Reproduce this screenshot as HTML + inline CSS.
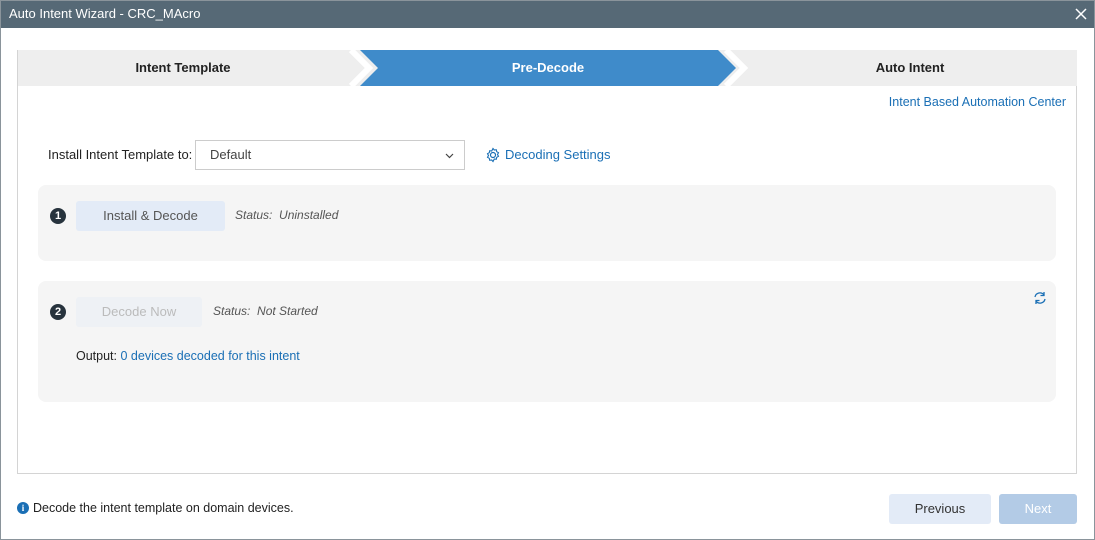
<!DOCTYPE html>
<html><head><style>
*{margin:0;padding:0;box-sizing:border-box}
body{width:1095px;height:540px;position:relative;background:#fff;font-family:"Liberation Sans",sans-serif;font-size:13px;color:#222;overflow:hidden}
.a{position:absolute}
.title{left:0;top:0;width:1095px;height:28px;background:#566976;color:#fff;font-size:13px;line-height:28px;padding-left:9px}
.frame{left:17px;top:50px;width:1060px;height:424px;border:1px solid #d4d4d4}
.lnk{color:#1a6fb5}
.card{background:#f5f5f5;border-radius:8px;left:38px;width:1018px}
.num{width:16px;height:16px;border-radius:50%;background:#27333d;color:#fff;font-size:11px;font-weight:bold;text-align:center;line-height:16px}
.btn{border-radius:3px;text-align:center}
.st{font-style:italic;color:#555;font-size:12px}
</style></head><body>
<div class="a" style="left:0;top:0;width:1095px;height:540px;border:1px solid #8a949b;z-index:5"></div>
<div class="a title">Auto Intent Wizard - CRC_MAcro</div>
<svg class="a" style="left:1075px;top:8px" width="12" height="12"><path d="M1 1L11 11M11 1L1 11" stroke="#fff" stroke-width="1.5"/></svg>
<div class="a frame"></div>
<svg class="a" style="left:18px;top:50px" width="1059" height="36">
<rect x="0" y="0" width="1059" height="36" fill="#eeeeee"/>
<polygon points="342,0 700,0 718,18 700,36 342,36 360,18" fill="#3f8bca"/>
<polyline points="333,0 351,18 333,36" fill="none" stroke="#fff" stroke-width="6"/>
<polyline points="708,0 726,18 708,36" fill="none" stroke="#fff" stroke-width="6"/>
<text x="165" y="22" text-anchor="middle" font-family="Liberation Sans" font-size="13" font-weight="bold" fill="#222">Intent Template</text>
<text x="530" y="22" text-anchor="middle" font-family="Liberation Sans" font-size="13" font-weight="bold" fill="#fff">Pre-Decode</text>
<text x="892" y="22" text-anchor="middle" font-family="Liberation Sans" font-size="13" font-weight="bold" fill="#222">Auto Intent</text>
</svg>
<div class="a lnk" style="right:29px;top:95px;font-size:12.5px">Intent Based Automation Center</div>
<div class="a" style="left:48px;top:147px">Install Intent Template to:</div>
<div class="a" style="left:195px;top:140px;width:270px;height:30px;border:1px solid #ccc;padding:6px 14px;color:#444">Default<svg style="position:absolute;right:10px;top:12px" width="9" height="6"><path d="M1 1L4.5 4.5 8 1" fill="none" stroke="#444" stroke-width="1.2"/></svg></div>
<svg class="a" style="left:485px;top:147px" width="16" height="16" viewBox="0 0 16 16"><circle cx="8" cy="8" r="2.5" fill="none" stroke="#1a6fb5" stroke-width="1.2"/><path d="M8 1.5l1.3 1.5 2-.3.4 2 1.8 1-1 1.8 1 1.8-1.8 1-.4 2-2-.3L8 14.5 6.7 13l-2 .3-.4-2-1.8-1 1-1.8-1-1.8 1.8-1 .4-2 2 .3z" fill="none" stroke="#1a6fb5" stroke-width="1.1"/></svg>
<div class="a lnk" style="left:505px;top:147px">Decoding Settings</div>
<div class="a card" style="top:185px;height:76px"></div>
<div class="a num" style="left:50px;top:208px">1</div>
<div class="a btn" style="left:76px;top:201px;width:149px;height:30px;background:#e3ebf7;color:#555;line-height:30px">Install &amp; Decode</div>
<div class="a st" style="left:235px;top:208px">Status:&nbsp; Uninstalled</div>
<div class="a card" style="top:281px;height:121px"></div>
<div class="a num" style="left:50px;top:304px">2</div>
<div class="a btn" style="left:76px;top:297px;width:126px;height:30px;background:#eef1f5;color:#bbb;line-height:30px">Decode Now</div>
<div class="a st" style="left:213px;top:304px">Status:&nbsp; Not Started</div>
<svg class="a" style="left:1033px;top:291px" width="14" height="14" viewBox="0 0 14 14"><path d="M2 6A5 5 0 0 1 11 4M12 8A5 5 0 0 1 3 10" fill="none" stroke="#1a6fb5" stroke-width="1.3"/><path d="M11 1v3.5H7.5M3 13V9.5h3.5" fill="none" stroke="#1a6fb5" stroke-width="1.3"/></svg>
<div class="a" style="left:76px;top:349px;font-size:12.5px">Output: <span class="lnk">0 devices decoded for this intent</span></div>
<div class="a num" style="left:17px;top:502px;width:12px;height:12px;line-height:12px;background:#1a6fb5;font-size:9px;font-family:'Liberation Serif'">i</div>
<div class="a" style="left:33px;top:501px;font-size:12.5px">Decode the intent template on domain devices.</div>
<div class="a btn" style="left:889px;top:494px;width:102px;height:30px;background:#e3ebf7;line-height:30px;color:#333">Previous</div>
<div class="a btn" style="left:999px;top:494px;width:78px;height:30px;background:#b3cbe6;line-height:30px;color:#fff">Next</div>
</body></html>
